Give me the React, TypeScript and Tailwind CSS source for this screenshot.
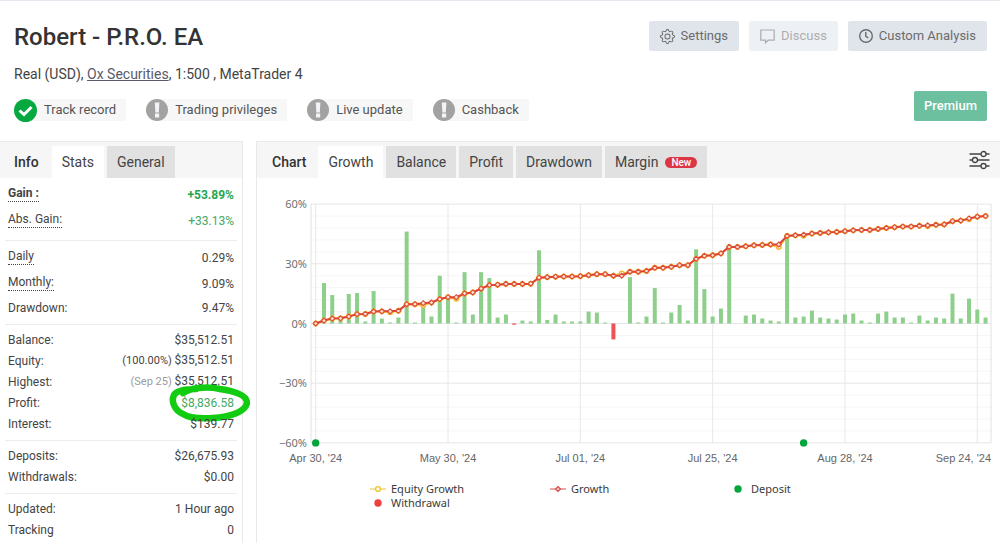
import { ReactNode } from "react";
import { BsGear } from "react-icons/bs";

const badges = [
    { label: "Track record", verified: true },
    { label: "Trading privileges", verified: false },
    { label: "Live update", verified: false },
    { label: "Cashback", verified: false },
];

type Stat = {
    label: string;
    value: string;
    note?: string;
    noteStyle?: string;
    underlined?: boolean;
    style?: string;
    labelStyle?: string;
    circled?: boolean;
};

const statGroups: Stat[][] = [
    [
        {
            label: "Gain :",
            value: "+53.89%",
            underlined: true,
            style: "font-bold text-[#1fa650]",
            labelStyle: "font-bold",
        },
        {
            label: "Abs. Gain:",
            value: "+33.13%",
            underlined: true,
            style: "text-[#45a862]",
        },
    ],
    [
        { label: "Daily", value: "0.29%", underlined: true },
        { label: "Monthly:", value: "9.09%", underlined: true },
        { label: "Drawdown:", value: "9.47%" },
    ],
    [
        { label: "Balance:", value: "$35,512.51" },
        { label: "Equity:", value: "$35,512.51", note: "(100.00%)" },
        {
            label: "Highest:",
            value: "$35,512.51",
            note: "(Sep 25)",
            noteStyle: "text-[#9b9b9b]",
        },
        {
            label: "Profit:",
            value: "$8,836.58",
            style: "text-[#45a862]",
            circled: true,
        },
        { label: "Interest:", value: "$139.77" },
    ],
    [
        { label: "Deposits:", value: "$26,675.93" },
        { label: "Withdrawals:", value: "$0.00" },
    ],
    [
        { label: "Updated:", value: "1 Hour ago" },
        { label: "Tracking", value: "0" },
    ],
];

const bars = [
    0, 20.3, 14.3, 2, 14.8, 15.3, 1, 16.3, 2.5, 0.5, 3, 46.2, 0.5, 8.7, 3.5, 24,
    12.3, 0.5, 25.8, 4.5, 25.8, 22.8, 3, 4.5, -0.6, 1.5, 1, 36.8, 1.8, 4.5, 1, 1,
    1, 6, 5.5, 0.5, -8, 0, 23.3, 0.5, 3.5, 17.8, 0.5, 5.5, 9.3, 1.5, 37.3, 17.3,
    3.5, 7.5, 37.8, 0, 4, 4.5, 2.5, 1.5, 1, 45.3, 3, 3.5, 6.5, 3, 2.5, 2, 4.5, 5,
    1.5, 0.5, 5, 6, 3, 3, 0.5, 4, 1.5, 3, 2.5, 15, 2.5, 12.5, 7, 3,
];

const growth = [
    0, 1.5, 2.5, 2.6, 3.5, 4.7, 4.8, 6, 6.1, 6.1, 6.4, 9.7, 9.7, 10.2, 10.5,
    12.3, 13.2, 13.2, 15.1, 15.6, 17.5, 19.3, 19.5, 19.9, 19.9, 19.9, 20, 23,
    23.3, 23.5, 23.6, 23.6, 23.8, 24.3, 24.8, 24.8, 24, 24, 26, 26, 26.4, 28, 28,
    28.5, 29.3, 29.3, 32.5, 34, 34.3, 35.2, 38.5, 38.5, 38.8, 39.3, 39.5, 39.7,
    39.7, 44, 44.3, 44.6, 45.2, 45.5, 45.8, 46, 46.4, 46.8, 47, 47, 47.5, 48,
    48.4, 48.7, 48.7, 49.1, 49.3, 49.6, 49.8, 51.4, 51.7, 52.8, 53.7, 54,
];

// places where equity differs from the growth line
const equityOffsets: Record<number, number> = {
    9: -0.5,
    13: -1,
    17: -0.8,
    37: 1.2,
    56: -1.3,
    59: -0.5,
    74: -0.4,
    79: -0.4,
};
const equity = growth.map((value, i) => value + (equityOffsets[i] ?? 0));

const xLabels = [
    { index: 0, label: "Apr 30, '24" },
    { index: 16, label: "May 30, '24" },
    { index: 32, label: "Jul 01, '24" },
    { index: 48, label: "Jul 25, '24" },
    { index: 64, label: "Aug 28, '24" },
    { index: 80, label: "Sep 24, '24" },
];
const yLabels = [60, 30, 0, -30, -60];

const plot = { left: 54, right: 734, top: 26, bottom: 265 };
const xAt = (index: number) => 58.7 + index * 8.27;
const yAt = (value: number) => 145.5 - value * 1.99;
const toPoints = (values: number[]) =>
    values.map((value, i) => `${xAt(i)},${yAt(value)}`).join(" ");

export default function App() {
    return (
        <div className="flex min-h-screen flex-col border-t border-[#e6e8f0] bg-white font-['Roboto',sans-serif] text-[#444]">
            <header className="flex justify-between pr-[13px] pl-[14px] pt-5">
                <div>
                    <h1 className="text-2xl leading-8 font-medium text-[#333]">
                        Robert - P.R.O. EA
                    </h1>
                    <p className="mt-[11px] text-sm leading-5">
                        Real (USD),{" "}
                        <a href="#broker" className="text-[#5a5a6a] underline">
                            Ox Securities
                        </a>
                        , 1:500 , MetaTrader 4
                    </p>
                    <ul className="mt-[15px] flex gap-5">
                        {badges.map((badge) => (
                            <li
                                key={badge.label}
                                className="flex h-[22px] items-center gap-[7px] rounded-l-full bg-[#f7f7f7] pr-[10px] text-[13px] text-[#555]"
                            >
                                <BadgeIcon verified={badge.verified} />
                                {badge.label}
                            </li>
                        ))}
                    </ul>
                </div>
                <div className="flex flex-col items-end justify-between">
                    <div className="flex gap-[10px]">
                        <HeaderButton>
                            <BsGear size={15} />
                            Settings
                        </HeaderButton>
                        <HeaderButton disabled>
                            <DiscussIcon />
                            Discuss
                        </HeaderButton>
                        <HeaderButton>
                            <ClockIcon />
                            Custom Analysis
                        </HeaderButton>
                    </div>
                    <button className="h-[30px] rounded-xs bg-[#6cc0a0] px-[10px] text-[13px] font-medium text-white">
                        Premium
                    </button>
                </div>
            </header>

            <main className="mt-5 flex flex-1 gap-[13px]">
                <section className="w-[243px] shrink-0 border-t border-r border-[#e9e9e9]">
                    <div className="flex h-9 items-end gap-[3px] bg-[#f6f6f6] pl-[14px]">
                        <h2 className="mr-[10px] text-sm leading-8 font-medium text-[#333]">
                            Info
                        </h2>
                        <Tab active>Stats</Tab>
                        <Tab>General</Tab>
                    </div>
                    <div className="px-[5px]">
                        {statGroups.map((group, i) => (
                            <dl
                                key={i}
                                className="border-b border-[#ececec] px-[3px] pt-1 pb-[6px] last:border-b-0"
                            >
                                {group.map((stat) => (
                                    <StatRow key={stat.label} stat={stat} />
                                ))}
                            </dl>
                        ))}
                    </div>
                </section>

                <section className="min-w-0 flex-1 border-t border-l border-[#e9e9e9]">
                    <div className="flex h-9 items-end gap-[3px] bg-[#f6f6f6] pr-[10px] pl-[15px]">
                        <h2 className="mr-[9px] text-sm leading-8 font-medium text-[#333]">
                            Chart
                        </h2>
                        <Tab active>Growth</Tab>
                        <Tab>Balance</Tab>
                        <Tab>Profit</Tab>
                        <Tab>Drawdown</Tab>
                        <Tab>
                            Margin
                            <span className="ml-[7px] rounded-full bg-[#dc3545] px-[6px] text-[10px] leading-[11px] font-medium text-white">
                                New
                            </span>
                        </Tab>
                        <button
                            aria-label="Chart options"
                            className="ml-auto self-center"
                        >
                            <SlidersIcon />
                        </button>
                    </div>
                    <GrowthChart />
                    <Legend />
                </section>
            </main>
        </div>
    );
}

type HeaderButtonProps = { children: ReactNode; disabled?: boolean };
function HeaderButton({ children, disabled }: HeaderButtonProps) {
    return (
        <button
            disabled={disabled}
            className="flex h-[30px] items-center gap-[6px] rounded-xs bg-[#e0e5ec] px-[11px] text-[13px] text-[#6b6b6b] disabled:opacity-55"
        >
            {children}
        </button>
    );
}

type TabProps = { children: ReactNode; active?: boolean };
function Tab({ children, active }: TabProps) {
    const activeStyles = active ? "bg-white" : "bg-[#e1e1e1]";

    return (
        <button
            className={`flex h-8 items-center px-[10px] text-sm text-[#444] ${activeStyles}`}
        >
            {children}
        </button>
    );
}

function StatRow({ stat }: { stat: Stat }) {
    const rowHeight = stat.underlined ? "h-[26px]" : "h-[21px]";
    const underline = stat.underlined
        ? "mb-[3px] border-b border-dotted border-[#444]"
        : "";

    return (
        <div className={`flex items-center justify-between text-xs ${rowHeight}`}>
            <dt className={`${underline} ${stat.labelStyle ?? ""}`}>
                {stat.label}
            </dt>
            <dd className={`relative ${stat.style ?? ""}`}>
                {stat.note && (
                    <span className={`text-[11px] ${stat.noteStyle ?? ""}`}>
                        {stat.note}{" "}
                    </span>
                )}
                {stat.value}
                {stat.circled && <CircleMark />}
            </dd>
        </div>
    );
}

function CircleMark() {
    return (
        <svg
            className="absolute -top-[14px] -right-4 h-11 w-[82px]"
            viewBox="0 0 82 44"
            fill="none"
            stroke="#12cc12"
            strokeWidth="6.5"
            strokeLinecap="round"
        >
            <path d="M15 12C22 7 38 5 52 8C66 10 79 14 79 22C77 31 62 36 45 37C31 38 21 37 15 33C6 29 3 20 6 14C9 9 18 8 28 8" />
        </svg>
    );
}

function GrowthChart() {
    return (
        <svg
            viewBox="0 0 743 292"
            className="block w-full"
            role="img"
            aria-label="Growth"
        >
            {Array.from({ length: 21 }, (_, i) => 60 - i * 6).map((value) => (
                <line
                    key={value}
                    x1={plot.left}
                    x2={plot.right}
                    y1={yAt(value)}
                    y2={yAt(value)}
                    stroke={value % 30 === 0 ? "#e6e6e6" : "#f6f6f6"}
                />
            ))}
            {xLabels.map(({ index }) => (
                <line
                    key={index}
                    x1={xAt(index)}
                    x2={xAt(index)}
                    y1={plot.top}
                    y2={plot.bottom}
                    stroke="#e8e8e8"
                />
            ))}
            <path
                d={`M${plot.left} ${plot.top}V${plot.bottom}M${plot.right} ${plot.top}V${plot.bottom}`}
                stroke="#e2e2e2"
            />

            {bars.map((value, i) => (
                <rect
                    key={i}
                    x={xAt(i) - 2}
                    y={value > 0 ? yAt(value) : yAt(0)}
                    width={4}
                    height={Math.abs(value) * 1.99}
                    fill={value < 0 ? "#ef5057" : "#8dcf8b"}
                />
            ))}

            <polyline
                points={toPoints(equity)}
                fill="none"
                stroke="#f2c12e"
                strokeWidth="2"
            />
            {equity.map((value, i) => (
                <circle
                    key={i}
                    cx={xAt(i)}
                    cy={yAt(value)}
                    r="2.2"
                    fill="#fff"
                    stroke="#f2b92e"
                    strokeWidth="1.5"
                />
            ))}
            <polyline
                points={toPoints(growth)}
                fill="none"
                stroke="#df4238"
                strokeWidth="2"
            />
            {growth.map((value, i) => (
                <path
                    key={i}
                    d={`M${xAt(i)} ${yAt(value) - 2.5}l2.5 2.5l-2.5 2.5l-2.5 -2.5z`}
                    fill="#fbe3d8"
                    stroke="#dd4b36"
                    strokeWidth="1.1"
                />
            ))}

            <circle cx={xAt(0)} cy={yAt(-60)} r="3.7" fill="#04a53c" />
            <circle cx={xAt(59)} cy={yAt(-60)} r="3.7" fill="#04a53c" />

            {yLabels.map((value) => (
                <text
                    key={value}
                    x={50}
                    y={yAt(value) + 4}
                    textAnchor="end"
                    className="fill-[#707070] font-['Noto_Sans',sans-serif] text-[11px]"
                >
                    {value < 0 ? `−${-value}` : value}%
                </text>
            ))}
            {xLabels.map(({ index, label }) => (
                <text
                    key={label}
                    x={index === 80 ? plot.right : xAt(index)}
                    y={284}
                    textAnchor={index === 80 ? "end" : "middle"}
                    className="fill-[#666] font-['Liberation_Sans',sans-serif] text-[11px]"
                >
                    {label}
                </text>
            ))}
        </svg>
    );
}

function Legend() {
    return (
        <ul className="mt-3 ml-[113px] grid grid-cols-[180px_180px_auto] font-['Noto_Sans',sans-serif] text-[11px] leading-[14px] text-[#3a3a3a]">
            <LegendItem label="Equity Growth">
                <path d="M0 7H16" stroke="#eec52f" />
                <circle cx="8" cy="7" r="2.4" fill="#fff" stroke="#eec52f" strokeWidth="1.4" />
            </LegendItem>
            <LegendItem label="Growth">
                <path d="M0 7H16" stroke="#d8504c" />
                <path d="M8 4.5L10.5 7L8 9.5L5.5 7Z" fill="#f4c4c0" stroke="#d8504c" strokeWidth="1.2" />
            </LegendItem>
            <LegendItem label="Deposit">
                <circle cx="8" cy="7" r="3.7" fill="#04a53c" />
            </LegendItem>
            <LegendItem label="Withdrawal">
                <circle cx="8" cy="7" r="3.7" fill="#ee4040" />
            </LegendItem>
        </ul>
    );
}

type LegendItemProps = { label: string; children: ReactNode };
function LegendItem({ label, children }: LegendItemProps) {
    return (
        <li className="flex items-center gap-[5px]">
            <svg width="16" height="14" viewBox="0 0 16 14" fill="none">
                {children}
            </svg>
            {label}
        </li>
    );
}

function BadgeIcon({ verified }: { verified: boolean }) {
    if (verified) {
        return (
            <svg width="23" height="23" viewBox="0 0 23 23" fill="none">
                <circle cx="11.5" cy="11.5" r="11.5" fill="#06a940" />
                <path d="M5.5 11.5L10 15.5L17.5 8" stroke="#fff" strokeWidth="3" />
            </svg>
        );
    }
    return (
        <svg width="22" height="22" viewBox="0 0 22 22">
            <circle cx="11" cy="11" r="11" fill="#a2a2a2" />
            <path d="M8.8 3.6h4.6l-.6 10h-3.4zM9 14.6h4.2v3.8h-4.2z" fill="#f4f4f8" />
        </svg>
    );
}

function DiscussIcon() {
    return (
        <svg width="15" height="15" viewBox="0 0 15 15" fill="none" stroke="currentColor" strokeWidth="1.2">
            <path d="M.8 1h13.4v10.2H8.2L5.4 13.8V11.2H.8z" />
        </svg>
    );
}

function ClockIcon() {
    return (
        <svg width="14" height="14" viewBox="0 0 14 14" fill="none" stroke="currentColor" strokeWidth="1.4">
            <circle cx="7" cy="7" r="6.3" />
            <path d="M6.8 3V7.3L9.4 9" />
        </svg>
    );
}

function SlidersIcon() {
    return (
        <svg width="21" height="20" viewBox="0 0 21 20" fill="#f6f6f6" stroke="#444" strokeWidth="1.3">
            <path d="M.5 4H20.5M.5 10H20.5M.5 16H20.5" />
            <circle cx="14.5" cy="4" r="2.5" />
            <circle cx="6" cy="10" r="2.5" />
            <circle cx="14.5" cy="16" r="2.5" />
        </svg>
    );
}
